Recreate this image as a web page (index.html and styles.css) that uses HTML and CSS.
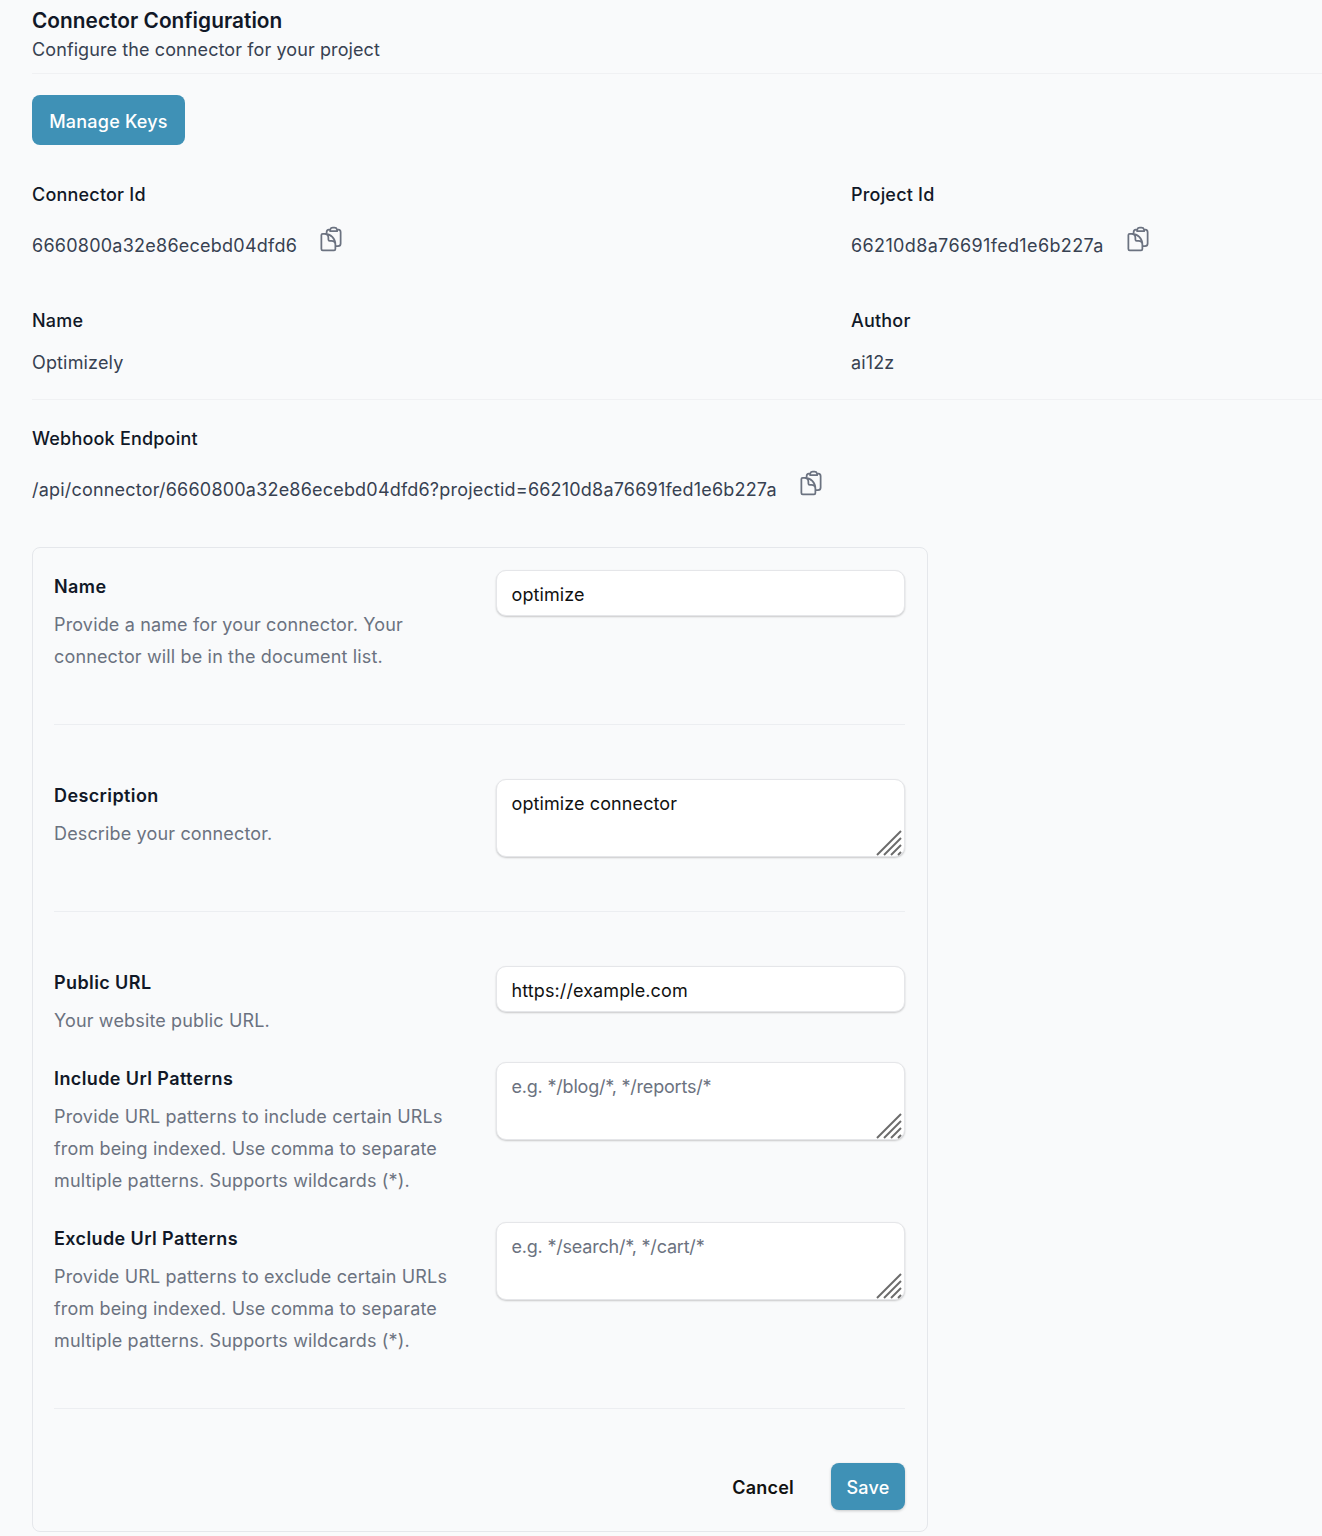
FILE: index.html
```html
<!DOCTYPE html>
<html>
<head>
    <title>Connector Configuration</title>
<link rel="stylesheet" href="styles.css">
</head>
<body>

<div class="page">

  <div class="page-header">
    <h1>Connector Configuration</h1>
    <p>Configure the connector for your project</p>
  </div>

  <button class="btn btn-keys">Manage Keys</button>

  <div class="meta-grid meta-ids">
    <div class="meta-item">
      <div class="meta-label">Connector Id</div>
      <div class="meta-value">
        <span class="connector-id">6660800a32e86ecebd04dfd6</span>
        <svg class="copy-icon" viewBox="0 0 24 24"><use href="#copy"></use></svg>
      </div>
    </div>
    <div class="meta-item">
      <div class="meta-label">Project Id</div>
      <div class="meta-value">
        <span class="project-id">66210d8a76691fed1e6b227a</span>
        <svg class="copy-icon" viewBox="0 0 24 24"><use href="#copy"></use></svg>
      </div>
    </div>
  </div>

  <div class="meta-grid meta-names">
    <div class="meta-item">
      <div class="meta-label">Name</div>
      <div class="meta-text">Optimizely</div>
    </div>
    <div class="meta-item">
      <div class="meta-label">Author</div>
      <div class="meta-text">ai12z</div>
    </div>
  </div>

  <div class="webhook">
    <div class="meta-label">Webhook Endpoint</div>
    <div class="meta-value">
      <span>/api/connector/6660800a32e86ecebd04dfd6?projectid=66210d8a76691fed1e6b227a</span>
      <svg class="copy-icon" viewBox="0 0 24 24"><use href="#copy"></use></svg>
    </div>
  </div>

  <form class="card">
    <div class="form-section section-name">
      <div class="form-row">
        <div class="form-info">
          <label>Name</label>
          <p>Provide a name for your connector. Your connector will be in the document list.</p>
        </div>
        <input class="field" type="text" value="optimize">
      </div>
    </div>

    <div class="form-section section-desc">
      <div class="form-row">
        <div class="form-info">
          <label>Description</label>
          <p>Describe your connector.</p>
        </div>
        <div class="area-wrap">
          <textarea class="field area">optimize connector</textarea>
          <svg class="grip" viewBox="0 0 26 26"><use href="#grip"></use></svg>
        </div>
      </div>
    </div>

    <div class="form-section section-urls">
      <div class="form-row">
        <div class="form-info">
          <label>Public URL</label>
          <p>Your website public URL.</p>
        </div>
        <input class="field" type="text" value="https://example.com">
      </div>
      <div class="form-row">
        <div class="form-info">
          <label>Include Url Patterns</label>
          <p>Provide URL patterns to include certain URLs from being indexed. Use comma to separate multiple patterns. Supports wildcards (*).</p>
        </div>
        <div class="area-wrap">
          <textarea class="field area" placeholder="e.g. */blog/*, */reports/*"></textarea>
          <svg class="grip" viewBox="0 0 26 26"><use href="#grip"></use></svg>
        </div>
      </div>
      <div class="form-row">
        <div class="form-info">
          <label>Exclude Url Patterns</label>
          <p>Provide URL patterns to exclude certain URLs from being indexed. Use comma to separate multiple patterns. Supports wildcards (*).</p>
        </div>
        <div class="area-wrap">
          <textarea class="field area" placeholder="e.g. */search/*, */cart/*"></textarea>
          <svg class="grip" viewBox="0 0 26 26"><use href="#grip"></use></svg>
        </div>
      </div>
    </div>

    <div class="form-actions">
      <button class="btn-cancel" type="button">Cancel</button>
      <button class="btn btn-save" type="button">Save</button>
    </div>
  </form>

</div>

<svg class="defs" width="0" height="0">
  <defs>
    <!-- clipboard copy icon -->
    <g id="copy" fill="none" stroke="currentColor" stroke-width="1.5" stroke-linecap="round" stroke-linejoin="round">
      <path d="M8.25 7.5V6.108c0-1.135.845-2.098 1.976-2.192.373-.03.748-.057 1.123-.08M15.75 18H18a2.25 2.25 0 0 0 2.25-2.25V6.108c0-1.135-.845-2.098-1.976-2.192a48.424 48.424 0 0 0-1.123-.08M15.75 18.75v-1.875a3.375 3.375 0 0 0-3.375-3.375h-1.5a1.125 1.125 0 0 1-1.125-1.125v-1.5A3.375 3.375 0 0 0 6.375 7.5H5.25m11.9-3.664A2.251 2.251 0 0 0 15 2.25h-1.5a2.251 2.251 0 0 0-2.15 1.586m5.8 0c.065.21.1.433.1.664v.75h-6V4.5c0-.231.035-.454.1-.664M6.75 7.5H4.875c-.621 0-1.125.504-1.125 1.125v12c0 .621.504 1.125 1.125 1.125h9.75c.621 0 1.125-.504 1.125-1.125V16.5a9 9 0 0 0-9-9Z"/>
    </g>
    <!-- textarea resize grip -->
    <g id="grip" stroke="#6b6b6b" stroke-width="2">
      <line x1="1" y1="25" x2="25" y2="1"/>
      <line x1="8" y1="25" x2="25" y2="8"/>
      <line x1="15" y1="25" x2="25" y2="15"/>
      <line x1="22" y1="25" x2="25" y2="22"/>
    </g>
  </defs>
</svg>

</body>
</html>
```

FILE: styles.css
```css
* {
  box-sizing: border-box;
}

body {
  margin: 0;
  background-color: #f9fafb;
  font-family: "Inter", "Liberation Sans", sans-serif;
  color: #374151;
  letter-spacing: 0.15px;
}

.page {
  padding: 8px 0 4px 32px;
}

.defs {
  position: absolute;
}

.page-header {
  height: 66px;
  border-bottom: 1px solid #f0f1f3;
}

.page-header h1 {
  margin: 0;
  font-size: 20.8px;
  line-height: 26px;
  font-weight: 600;
  color: #111827;
  letter-spacing: 0.04px;
}

.page-header p {
  margin: 2px 0 0;
  font-size: 18px;
  line-height: 28px;
  letter-spacing: 0.1px;
}

.btn {
  border: none;
  border-radius: 8px;
  background-color: #3f91b6;
  color: #fff;
  font-family: inherit;
  font-size: 18px;
  font-weight: 500;
  letter-spacing: 0.22px;
}

.btn-keys {
  display: block;
  margin-top: 21px;
  padding: 2px 0 0;
  width: 153px;
  height: 50px;
}

.meta-grid {
  display: grid;
  grid-template-columns: 819px 1fr;
}

.meta-ids {
  margin-top: 36px;
}

.meta-names {
  margin-top: 47px;
  height: 93px;
  border-bottom: 1px solid #f0f1f3;
}

.meta-label {
  font-size: 18px;
  line-height: 28px;
  font-weight: 500;
  color: #111827;
  letter-spacing: 0.2px;
}

.meta-value {
  display: flex;
  align-items: flex-start;
  gap: 20px;
  margin-top: 23px;
  font-size: 18px;
  line-height: 28px;
  letter-spacing: 0.2px;
}

.connector-id {
  letter-spacing: 0.24px;
}

.project-id {
  letter-spacing: 0.36px;
}

.meta-text {
  margin-top: 14px;
  font-size: 18px;
  line-height: 28px;
}

.copy-icon {
  width: 28px;
  height: 28px;
  margin-top: -7px;
  color: #6b7280;
}

.webhook {
  margin-top: 25px;
}

.card {
  margin-top: 43px;
  width: 896px;
  padding: 22px 22px 21px 21px;
  border: 1px solid #e5e7eb;
  border-radius: 8px;
}

.form-section {
  border-bottom: 1px solid #eceef1;
}

.section-name {
  height: 155px;
}

.section-desc {
  margin-top: 54px;
  height: 133px;
}

.section-urls {
  margin-top: 54px;
  height: 443px;
}

.form-row {
  display: grid;
  grid-template-columns: 442px 409px;
  margin-bottom: 25px;
}

.form-info label {
  display: block;
  margin-top: 3px;
  font-size: 18px;
  line-height: 28px;
  font-weight: 600;
  color: #111827;
  letter-spacing: 0.4px;
}

.form-info p {
  margin: 8px 0 0;
  max-width: 410px;
  font-size: 18px;
  line-height: 32px;
  color: #6b7280;
}

.field {
  display: block;
  width: 100%;
  height: 46px;
  padding: 3px 15px 0 14.5px;
  border: 1px solid #e5e6e9;
  border-radius: 10px;
  background: #fff;
  box-shadow: 0 1px 2px rgba(0, 0, 0, 0.2);
  font-family: inherit;
  font-size: 18px;
  color: #111;
  letter-spacing: 0.1px;
}

.area {
  height: 78px;
  padding: 10px 15px 10px 14.5px;
  line-height: 28px;
  resize: none;
}

.field::placeholder {
  color: #6b7280;
  letter-spacing: -0.2px;
}

.area-wrap {
  position: relative;
  height: 78px;
}

.grip {
  position: absolute;
  right: 3px;
  bottom: 1px;
  width: 26px;
  height: 26px;
}

.form-actions {
  display: flex;
  justify-content: flex-end;
  align-items: center;
  gap: 37px;
  margin-top: 54px;
}

.btn-cancel {
  border: none;
  background: none;
  padding: 2px 0 0;
  font-family: inherit;
  font-size: 18px;
  font-weight: 600;
  color: #111;
  letter-spacing: 0.2px;
}

.btn-save {
  width: 74px;
  height: 47px;
  padding: 2px 0 0;
  box-shadow: 0 1px 3px rgba(0, 0, 0, 0.2);
}
```
